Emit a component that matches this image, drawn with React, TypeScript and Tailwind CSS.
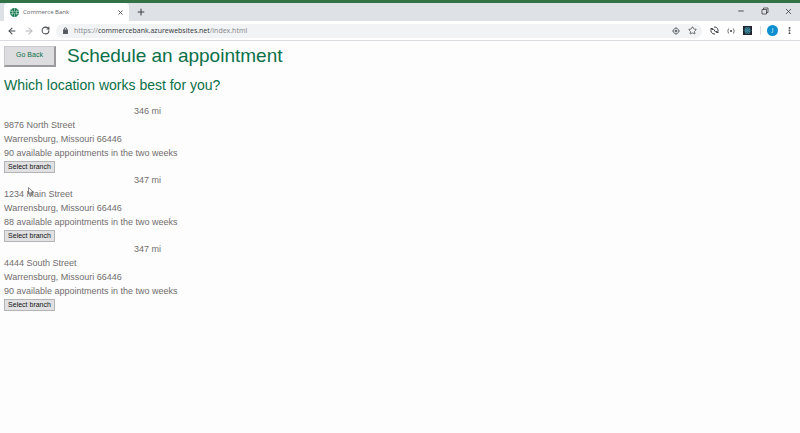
import type { ReactNode } from "react";
import {
  ArrowLeft,
  ArrowRight,
  RotateCw,
  Plus,
  X,
  Minus,
  Star,
  EllipsisVertical,
} from "lucide-react";

type Branch = { id: number; distance: string; street: string; city: string; slots: number };

const branches: Branch[] = [
  { id: 1, distance: "346 mi", street: "9876 North Street", city: "Warrensburg, Missouri 66446", slots: 90 },
  { id: 2, distance: "347 mi", street: "1234 Main Street", city: "Warrensburg, Missouri 66446", slots: 88 },
  { id: 3, distance: "347 mi", street: "4444 South Street", city: "Warrensburg, Missouri 66446", slots: 90 },
];

function IconButton({ label, children, className = "" }: { label: string; children: ReactNode; className?: string }) {
  return (
    <button type="button" aria-label={label} className={`flex shrink-0 items-center justify-center ${className}`}>
      {children}
    </button>
  );
}

function Favicon() {
  return (
    <svg viewBox="0 0 18 18" className="size-[9px] shrink-0" aria-hidden="true">
      <circle cx="9" cy="9" r="9" fill="#16794f" />
      <g fill="none" stroke="#d5eadf" strokeWidth="1.2">
        <path d="M3 2.500C6 5 6 13 3 15.500M9 0v18M15 2.500c-3 2.500-3 10.500 0 13" />
        <path d="M.5 6.500c5 1.500 12 1.500 17 0M.5 11.500c5-1.500 12-1.500 17 0" />
      </g>
      <circle cx="9" cy="9" r="1.800" fill="#16794f" />
    </svg>
  );
}

function TabStrip() {
  return (
    <div className="flex h-[18px] bg-[#dee1e6] pl-1">
      <div className="flex w-[125px] items-center rounded-t-[4px] bg-white pr-[5px] pl-[6px]">
        <Favicon />
        <span className="ml-1 flex-1 text-[6px] leading-[9px] text-[#5f6368]">Commerce Bank</span>
        <IconButton label="Close tab" className="size-[7px] text-[#4a4d51]">
          <X className="size-[7px]" strokeWidth={3} />
        </IconButton>
      </div>
      <IconButton label="New tab" className="ml-[6px] w-[11px] text-[#3c4043]">
        <Plus className="size-[10px]" strokeWidth={2.5} />
      </IconButton>
      <div className="ml-auto flex items-center gap-[15px] pr-[7px] pb-[2px] text-[#333]">
        <IconButton label="Minimize" className="size-[9px]">
          <Minus className="size-[8px]" strokeWidth={2.5} />
        </IconButton>
        <IconButton label="Restore" className="size-[9px]">
          <svg viewBox="0 0 16 16" className="size-[8px]" fill="none" stroke="currentColor" strokeWidth="1.5">
            <path d="M2 5h9v9H2zM5 5V2h9v9h-3" />
          </svg>
        </IconButton>
        <IconButton label="Close window" className="size-[9px]">
          <X className="size-[9px]" strokeWidth={2} />
        </IconButton>
      </div>
    </div>
  );
}

function Toolbar() {
  return (
    <div className="flex h-5 items-center border-b border-[#dadce0] bg-white pr-[6px] pl-[6px] text-[#5f6368]">
      <div className="flex items-center gap-[6px]">
        <IconButton label="Back" className="size-[11px] text-[#45484c]">
          <ArrowLeft className="size-[10px]" strokeWidth={2.5} />
        </IconButton>
        <IconButton label="Forward" className="size-[11px] text-[#b5b7ba]">
          <ArrowRight className="size-[10px]" strokeWidth={2.5} />
        </IconButton>
        <IconButton label="Reload" className="size-[11px] text-[#45484c]">
          <RotateCw className="size-[9px]" strokeWidth={2.7} />
        </IconButton>
      </div>
      <div className="ml-[5px] flex h-[14px] min-w-0 flex-1 items-center rounded-full bg-[#f1f3f4] pr-[5px] pl-[6px]">
        <svg viewBox="0 0 14 14" className="size-[7px] shrink-0" fill="none" stroke="#55595e" strokeWidth="1.8" aria-hidden="true">
          <rect x="3" y="6" width="8" height="7" fill="#55595e" />
          <path d="M4.500 6V4a2.500 2.500 0 0 1 5 0v2" />
        </svg>
        <a href="#top" className="ml-[5px] flex-1 text-[7px] leading-[10px] text-[#84888d]">
          https://<span className="text-[#33363a]">commercebank.azurewebsites.net</span>/index.html
        </a>
        <IconButton label="Location" className="mr-[8px] size-[8px]">
          <svg viewBox="0 0 16 16" className="size-[8px]" fill="none" stroke="currentColor" strokeWidth="1.600">
            <circle cx="8" cy="8" r="5.500" />
            <circle cx="8" cy="8" r="2" fill="currentColor" />
            <path d="M8 0v2.500M8 13.500V16M0 8h2.500M13.500 8H16" />
          </svg>
        </IconButton>
        <IconButton label="Bookmark" className="size-[9px]">
          <Star className="size-[9px]" strokeWidth={2.500} />
        </IconButton>
      </div>
      <div className="ml-[8px] flex items-center">
        <IconButton label="Sync extension" className="size-[9px]">
          <svg viewBox="0 0 18 18" className="size-[9px]" fill="none" stroke="#3f4246" strokeWidth="2">
            <path d="M8 2a7 7 0 0 1 6.500 11.500M17 13h-4v-3M10 16A7 7 0 0 1 3.500 4.500M1 5h4v3" />
            <path d="M6.500 5.500l5 7" />
          </svg>
        </IconButton>
        <IconButton label="Braces extension" className="ml-2 w-[8px]">
          <svg viewBox="0 0 16 12" className="h-[6px] w-[8px]" fill="none" stroke="#45484c" strokeWidth="1.600">
            <path d="M4 1C2 1 3 5 1 6c2 1 1 5 3 5M12 1c2 0 1 4 3 5-2 1-1 5-3 5" />
            <path d="M6 4l4 4M10 4L6 8" />
          </svg>
        </IconButton>
        <IconButton label="React extension" className="ml-2 size-[9px] bg-[#20232a]">
          <svg viewBox="0 0 18 18" className="size-[9px]" fill="none" stroke="#42a8bd" strokeWidth="1.200">
            <ellipse cx="9" cy="9" rx="7" ry="2.800" />
            <ellipse cx="9" cy="9" rx="7" ry="2.800" transform="rotate(60 9 9)" />
            <ellipse cx="9" cy="9" rx="7" ry="2.800" transform="rotate(120 9 9)" />
            <circle cx="9" cy="9" r="1" fill="#42a8bd" />
          </svg>
        </IconButton>
        <span className="ml-[8px] h-[9px] w-px bg-[#dadce0]" />
        <IconButton label="Profile" className="ml-[6px] size-[11px] rounded-full bg-[#0d8fd0] text-[6px] text-white">
          J
        </IconButton>
        <IconButton label="Menu" className="ml-[7px] size-[9px] text-[#3c4043]">
          <EllipsisVertical className="size-[9px]" strokeWidth={3} />
        </IconButton>
      </div>
    </div>
  );
}

function BranchItem({ branch }: { branch: Branch }) {
  return (
    <li className="flex flex-col items-start">
      <p className="pl-[130px]">{branch.distance}</p>
      <p>{branch.street}</p>
      <p>{branch.city}</p>
      <p>{branch.slots} available appointments in the two weeks</p>
      <button
        type="button"
        className="mt-px h-[12px] w-[51px] border border-[#b4b4b6] bg-[#e1e1e3] text-center text-[7px] leading-[10px] text-[#111]"
      >
        Select branch
      </button>
    </li>
  );
}

function Cursor() {
  return (
    <svg viewBox="0 0 12 18" className="pointer-events-none absolute top-[187px] left-[28px] h-[9px] w-[6px]" aria-hidden="true">
      <path d="M1 1v13l3-3 2.500 6 2.500-1-2.500-5.500H11z" fill="none" stroke="#666" strokeWidth="1.500" />
    </svg>
  );
}

export default function App() {
  return (
    <div id="top" className="relative min-h-screen bg-[#fefdfe] font-['Liberation_Sans',Arial,sans-serif]">
      <header className="border-t-[3px] border-[#317346] font-['Open_Sans','Noto_Sans',sans-serif]">
        <TabStrip />
        <Toolbar />
      </header>
      <main className="px-1 pt-1">
        <div className="flex items-center gap-[11px]">
          <button
            type="button"
            className="h-[21px] w-[52px] border-t border-r-2 border-b-2 border-l border-t-[#c9c8ca] border-r-[#9b999c] border-b-[#9b999c] border-l-[#c9c8ca] bg-[#dddcde] text-[7px] text-[#0b7048]"
          >
            Go Back
          </button>
          <h1 className="text-[19px] leading-[22px] text-[#0b7048]">Schedule an appointment</h1>
        </div>
        <h2 className="mt-[9px] text-[14px] leading-[18px] text-[#0b7048]">Which location works best for you?</h2>
        <ul className="mt-[10px] text-[9px] leading-[14px] text-[#706d6d]">
          {branches.map((branch) => (
            <BranchItem key={branch.id} branch={branch} />
          ))}
        </ul>
      </main>
      <Cursor />
    </div>
  );
}
